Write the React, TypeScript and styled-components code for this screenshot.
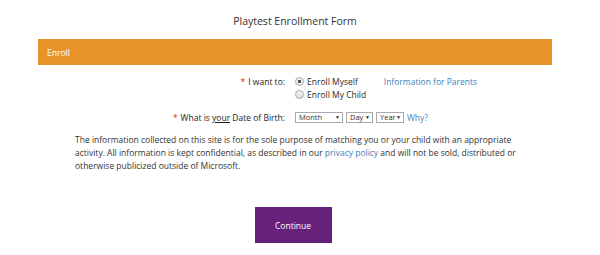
import React from "react";
import styled, { createGlobalStyle } from "styled-components";

const GlobalStyle = createGlobalStyle`
  html, body {
    margin: 0;
    padding: 0;
    background: #ffffff;
  }
  body {
    font-family: "Open Sans", "Noto Sans", sans-serif;
    color: #333333;
  }
`;

const Page = styled.div`
  width: 514px;
  margin-left: 38px;
  padding-top: 12px;
`;

const Title = styled.h1`
  margin: 0 0 9px 0;
  text-align: center;
  font-size: 10.5px;
  font-weight: 400;
  line-height: 18px;
  color: #333333;
`;

const SectionBar = styled.div`
  height: 26px;
  display: flex;
  align-items: center;
  padding-left: 9px;
  background: #e8922a;
  color: #ffffff;
  font-size: 8.5px;
`;

const FormGrid = styled.div`
  display: grid;
  grid-template-columns: 247px 1fr;
  column-gap: 10px;
  row-gap: 10px;
  margin-top: 10px;
  font-size: 8.5px;
`;

const Label = styled.div`
  text-align: right;
  color: #1e1e1e;
  line-height: 13px;
`;

const Required = styled.span`
  color: #e0201b;
  margin-right: 3px;
`;

const RadioColumn = styled.div`
  display: flex;
  flex-direction: column;
`;

const RadioRow = styled.div`
  display: flex;
  align-items: center;
  gap: 26px;
  line-height: 13px;
`;

const RadioOption = styled.label`
  display: flex;
  align-items: center;
  gap: 3px;
  color: #2a2a2a;
`;

const RadioDot = styled.span<{ $checked?: boolean }>`
  width: 7px;
  height: 7px;
  border-radius: 50%;
  border: 1px solid #a8a8a8;
  background: ${(p) =>
    p.$checked
      ? "radial-gradient(circle, #555 0 1.6px, #f2f2f2 2px)"
      : "linear-gradient(#f6f6f6, #dcdcdc)"};
`;

const Link = styled.a`
  color: #3f7fc0;
  text-decoration: none;
`;

const DateRow = styled.div`
  display: flex;
  align-items: center;
  gap: 3px;
  line-height: 13px;
`;

const SelectBox = styled.span<{ $width: number }>`
  box-sizing: border-box;
  width: ${(p) => p.$width}px;
  height: 11px;
  display: flex;
  align-items: center;
  justify-content: space-between;
  padding: 0 2px 0 3px;
  border: 1px solid #a9a9a9;
  background: #ffffff;
  color: #333333;
  font-size: 7.5px;
`;

const Caret = styled.span`
  font-size: 5px;
  color: #222222;
`;

const Notice = styled.p`
  margin: 9px 0 0 0;
  padding: 0 25px 0 37px;
  font-size: 8.5px;
  line-height: 13px;
  color: #333333;
`;

const Actions = styled.div`
  display: flex;
  justify-content: center;
  margin-top: 35px;
  padding-right: 4px;
`;

const ContinueButton = styled.button`
  width: 77px;
  height: 36px;
  border: none;
  background: #68217a;
  color: #ffffff;
  font-family: "Open Sans", "Noto Sans", sans-serif;
  font-size: 8.5px;
  cursor: pointer;
`;

const App: React.FC = () => {
  return (
    <>
      <GlobalStyle />
      <Page>
        <Title>Playtest Enrollment Form</Title>
        <SectionBar>Enroll</SectionBar>

        <FormGrid>
          <Label>
            <Required>*</Required>I want to:
          </Label>
          <RadioColumn>
            <RadioRow>
              <RadioOption>
                <RadioDot $checked />
                Enroll Myself
              </RadioOption>
              <Link href="#">Information for Parents</Link>
            </RadioRow>
            <RadioRow>
              <RadioOption>
                <RadioDot />
                Enroll My Child
              </RadioOption>
            </RadioRow>
          </RadioColumn>

          <Label>
            <Required>*</Required>What is <u>your</u> Date of Birth:
          </Label>
          <DateRow>
            <SelectBox $width={48}>
              Month<Caret>▼</Caret>
            </SelectBox>
            <SelectBox $width={27}>
              Day<Caret>▼</Caret>
            </SelectBox>
            <SelectBox $width={28}>
              Year<Caret>▼</Caret>
            </SelectBox>
            <Link href="#">Why?</Link>
          </DateRow>
        </FormGrid>

        <Notice>
          The information collected on this site is for the sole purpose of matching you or your
          child with an appropriate activity. All information is kept confidential, as described in
          our <Link href="#">privacy policy</Link> and will not be sold, distributed or otherwise
          publicized outside of Microsoft.
        </Notice>

        <Actions>
          <ContinueButton>Continue</ContinueButton>
        </Actions>
      </Page>
    </>
  );
};

export default App;
